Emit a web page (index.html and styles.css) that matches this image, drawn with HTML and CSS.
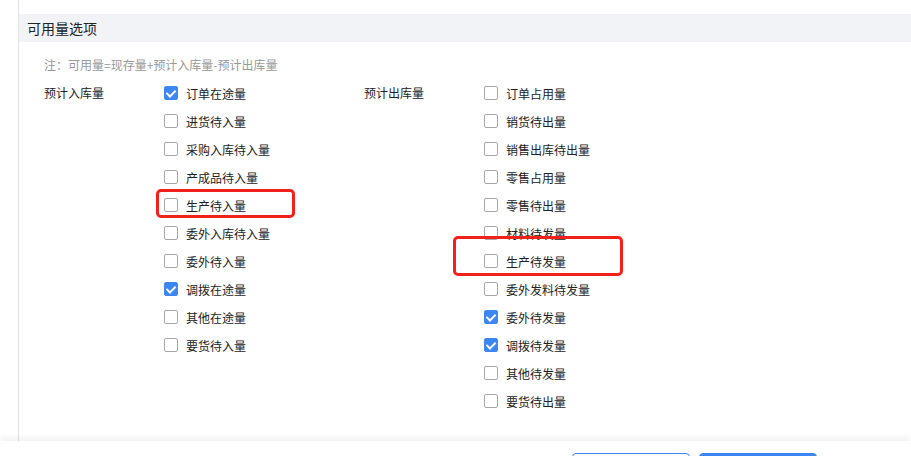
FILE: index.html
```html
<!DOCTYPE html>
<html lang="zh">
<head>
  <meta charset="UTF-8" />
  <title>可用量选项</title>
  <link rel="stylesheet" href="styles.css">
</head>
<body>
  <div class="page">
    <div class="panel">
      <div class="section-title">可用量选项</div>
      <div class="note">注：可用量=现存量+预计入库量-预计出库量</div>
      <div class="options">
        <div class="group">
          <div class="group-label">预计入库量</div>
          <ul class="group-list">
            <li class="item"><span class="box checked"></span>订单在途量</li>
            <li class="item"><span class="box"></span>进货待入量</li>
            <li class="item"><span class="box"></span>采购入库待入量</li>
            <li class="item"><span class="box"></span>产成品待入量</li>
            <li class="item"><span class="box"></span>生产待入量<span class="mark mark-in"></span></li>
            <li class="item"><span class="box"></span>委外入库待入量</li>
            <li class="item"><span class="box"></span>委外待入量</li>
            <li class="item"><span class="box checked"></span>调拨在途量</li>
            <li class="item"><span class="box"></span>其他在途量</li>
            <li class="item"><span class="box"></span>要货待入量</li>
          </ul>
        </div>
        <div class="group">
          <div class="group-label">预计出库量</div>
          <ul class="group-list">
            <li class="item"><span class="box"></span>订单占用量</li>
            <li class="item"><span class="box"></span>销货待出量</li>
            <li class="item"><span class="box"></span>销售出库待出量</li>
            <li class="item"><span class="box"></span>零售占用量</li>
            <li class="item"><span class="box"></span>零售待出量</li>
            <li class="item"><span class="box"></span>材料待发量</li>
            <li class="item"><span class="box"></span>生产待发量<span class="mark mark-out"></span></li>
            <li class="item"><span class="box"></span>委外发料待发量</li>
            <li class="item"><span class="box checked"></span>委外待发量</li>
            <li class="item"><span class="box checked"></span>调拨待发量</li>
            <li class="item"><span class="box"></span>其他待发量</li>
            <li class="item"><span class="box"></span>要货待出量</li>
          </ul>
        </div>
      </div>
    </div>
    <div class="footer">
      <button class="btn btn-ghost" aria-label="取消"></button>
      <button class="btn btn-primary" aria-label="确定"></button>
    </div>
  </div>
</body>
</html>
```

FILE: styles.css
```css
body { margin: 0; font-family: "Noto Sans CJK SC", "Liberation Sans", sans-serif; color: #222; background: #fff; }
.page { width: 911px; height: 456px; overflow: hidden; display: flex; flex-direction: column; }
.panel { margin-left: 18px; height: 427px; padding-top: 14px; border-left: 1px solid #e2e2e2; flex-shrink: 0; }
.section-title { height: 28px; line-height: 28px; padding-left: 8px; background: #f2f3f7; font-size: 14px; color: #222; }
.note { margin-top: 15px; padding-left: 25px; font-size: 12px; line-height: 16px; color: #999; }
.options { display: flex; padding-left: 25px; margin-top: 6px; }
.group { display: flex; width: 320px; }
.group-label { width: 120px; font-size: 12px; line-height: 28px; }
.group-list { list-style: none; margin: 0; padding: 0; }
.item { position: relative; display: flex; align-items: center; height: 28px; font-size: 12px; }
.box { width: 12px; height: 12px; border: 1px solid #a8a8a8; border-radius: 2px; margin-right: 8px; position: relative; background: #fff; }
.box.checked { background: #3d87f5; border-color: #3d87f5; }
.box.checked::after { content: ""; position: absolute; left: 3px; top: 1px; width: 4px; height: 7px; border: solid #fff; border-width: 0 2px 2px 0; transform: rotate(45deg); }
.mark { position: absolute; border: 3px solid #f1211b; border-radius: 5px; box-sizing: border-box; }
.mark-in { left: -8px; top: -2px; width: 139px; height: 29px; }
.mark-out { left: -31px; top: -11px; width: 170px; height: 40px; }
.footer { position: relative; flex: 1; display: flex; justify-content: flex-end; gap: 9px; padding: 12px 94px 0 0; background: #fff; box-shadow: 0 -4px 6px rgba(0,0,0,0.05); }
.btn { width: 118px; height: 32px; border-radius: 4px; font-size: 14px; font-family: inherit; }
.btn-ghost { background: #fff; border: 1px solid #3d87f5; color: #3d87f5; }
.btn-primary { background: #3d87f5; border: 1px solid #3d87f5; color: #fff; }
```
